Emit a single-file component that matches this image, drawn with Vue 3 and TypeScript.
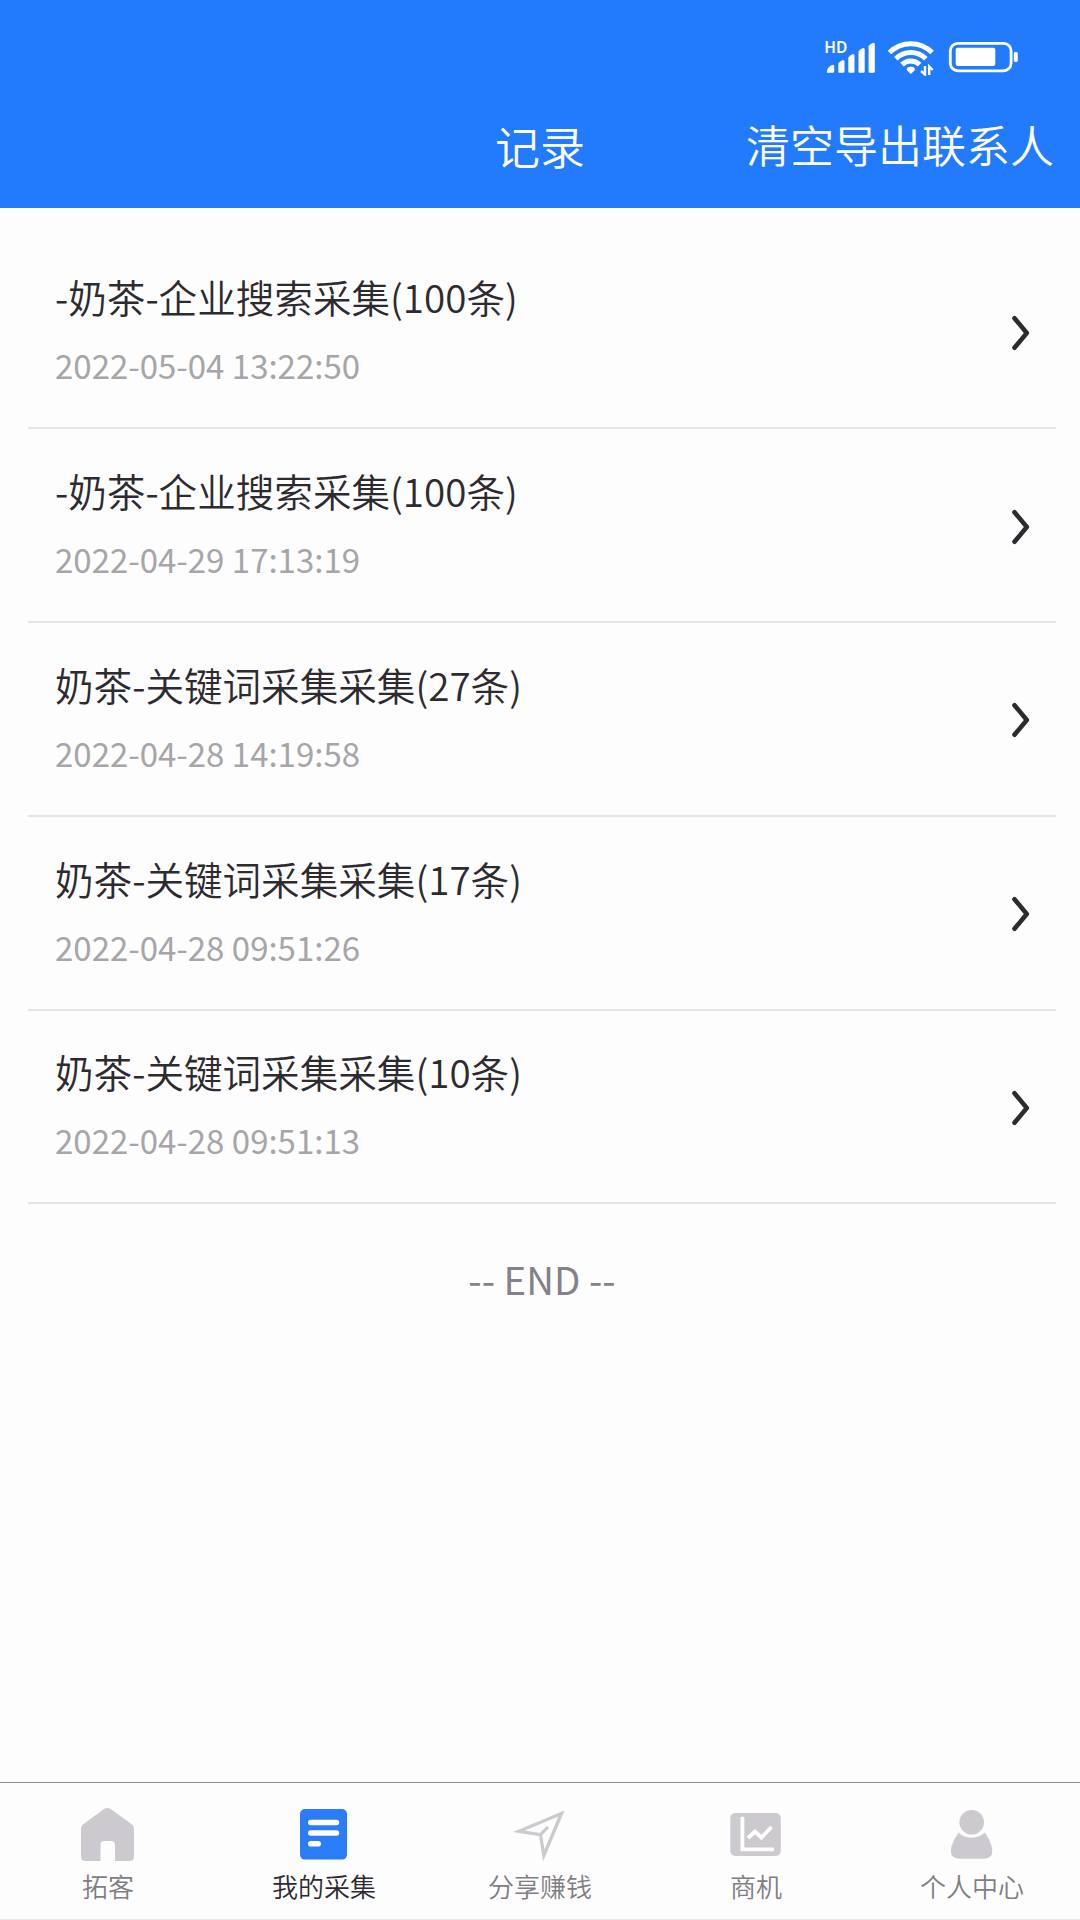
<script setup lang="ts">
interface RecordItem {
  title: string
  time: string
}

interface Tab {
  icon: 'home' | 'list' | 'share' | 'chart' | 'user'
  label: string
}

const records: RecordItem[] = [
  { title: '-奶茶-企业搜索采集(100条)', time: '2022-05-04 13:22:50' },
  { title: '-奶茶-企业搜索采集(100条)', time: '2022-04-29 17:13:19' },
  { title: '奶茶-关键词采集采集(27条)', time: '2022-04-28 14:19:58' },
  { title: '奶茶-关键词采集采集(17条)', time: '2022-04-28 09:51:26' },
  { title: '奶茶-关键词采集采集(10条)', time: '2022-04-28 09:51:13' },
]

const tabs: Tab[] = [
  { icon: 'home', label: '拓客' },
  { icon: 'list', label: '我的采集' },
  { icon: 'share', label: '分享赚钱' },
  { icon: 'chart', label: '商机' },
  { icon: 'user', label: '个人中心' },
]

const activeTab: Tab['icon'] = 'list'
</script>

<template>
  <div class="app">
    <header class="header">
      <div class="status">
        <svg width="57" height="46" viewBox="820 30 57 46" fill="#fff">
          <text x="824.2" y="52.6" class="hd">HD</text>
          <path d="M827 72.7v-2.2q.6-3.600 5-5.600q2.200-.6 2.200 1.500v4.800q0 1.500-1.500 1.500z" />
          <path d="M838.300 71.500V63.500q1.500-2.500 4.400-3.500q1.800-.2 1.800 1.500V71.500q0 1.200-1.200 1.200h-3.800q-1.200 0-1.200-1.200z" />
          <path d="M848.300 71.500V57.500q1.500-2.500 4.400-3.500q1.800-.2 1.800 1.500V71.500q0 1.200-1.200 1.200h-3.800q-1.200 0-1.200-1.200z" />
          <path d="M858.500 71.500V51.500q1.500-2.500 4.400-3.500q1.800-.2 1.800 1.500V71.500q0 1.200-1.200 1.200h-3.800q-1.200 0-1.200-1.200z" />
          <path d="M868.600 71.500V46.300q1.500-2.500 4.400-3.500q1.800-.2 1.800 1.500V71.500q0 1.200-1.200 1.200h-3.800q-1.200 0-1.200-1.200z" />
        </svg>
        <svg width="48" height="46" viewBox="887 30 48 46">
          <g fill="none" stroke="#fff" stroke-width="5">
            <path d="M889.500 52.600a30 30 0 0 1 42.600 0" />
            <path d="M895.800 58.800a21 21 0 0 1 30 0" />
            <path d="M902 64.600a12.500 12.500 0 0 1 17.600 0" />
          </g>
          <path d="M910.800 74l-4-3.800q-.5-3.400 4-3.400t4 3.400z" fill="#fff" />
          <path d="M925 66v8.500l-4-3.500M929.200 75v-8.500l3.500 3.500" fill="none" stroke="#fff" stroke-width="2.400" />
        </svg>
        <svg class="battery" width="72" height="46" viewBox="948 30 72 46">
          <rect x="950.300" y="43.400" width="60.800" height="27.400" rx="7.500" fill="none" stroke="#fff" stroke-width="2.800" />
          <rect x="955.700" y="47.800" width="39.600" height="18.300" rx="2" fill="#fff" />
          <rect x="1013.800" y="51.800" width="4" height="10.400" rx="2" fill="#fff" />
        </svg>
      </div>
      <div class="nav">
        <h1 class="nav-title">记录</h1>
        <span class="nav-action">清空导出联系人</span>
      </div>
    </header>

    <main class="content">
      <ul class="list">
        <li v-for="item in records" :key="item.time" class="row">
          <div class="row-text">
            <div class="row-title">{{ item.title }}</div>
            <div class="row-time">{{ item.time }}</div>
          </div>
          <svg class="chevron" width="20" height="38" viewBox="0 0 20 38">
            <path d="M3.500 4.200L15.800 19L3.500 33.800" fill="none" stroke="#2d2b30" stroke-width="4.600" stroke-linecap="round" stroke-linejoin="round" />
          </svg>
        </li>
      </ul>
      <div class="end">-- END --</div>
    </main>

    <nav class="tabs">
      <div v-for="tab in tabs" :key="tab.icon" class="tab" :class="{ active: tab.icon === activeTab }">
        <svg v-if="tab.icon === 'home'" width="60" height="60" viewBox="78 1804 60 60">
          <path d="M104.500 1808.800q2.900-1.800 5.800 0L131.500 1824q2.500 1.800 2.500 5v27.500q0 4.500-4.500 4.500H115v-16q0-4-4-4h-6.500q-4 0-4 4v16H85.500q-4.500 0-4.500-4.500V1829q0-3.200 2.500-5z" fill="#cccace" />
        </svg>
        <svg v-else-if="tab.icon === 'list'" width="60" height="60" viewBox="294 1804 60 60">
          <rect x="300" y="1809" width="47" height="50.600" rx="5" fill="#2a7cf8" />
          <path d="M310.800 1822.500h25.600M310.800 1833h25.600M310.800 1843.700h7.400" stroke="#fff" stroke-width="5.600" stroke-linecap="round" />
        </svg>
        <svg v-else-if="tab.icon === 'share'" width="60" height="60" viewBox="510 1804 60 60">
          <path d="M561.500 1813.500L519 1831.300L540.500 1834.600L543.800 1855.500ZM540.500 1834.600L548 1826.800" fill="none" stroke="#cccace" stroke-width="3.300" />
        </svg>
        <svg v-else-if="tab.icon === 'chart'" width="60" height="60" viewBox="726 1804 60 60">
          <rect x="730.300" y="1813" width="50.500" height="43" rx="5" fill="#cccace" />
          <path d="M742.400 1818.500V1849.300H772.500" fill="none" stroke="#fff" stroke-width="3.800" stroke-linecap="round" />
          <path d="M748 1838L755 1831.500L761.500 1837.500L771.500 1827" fill="none" stroke="#fff" stroke-width="3.800" />
        </svg>
        <svg v-else width="60" height="60" viewBox="942 1804 60 60" fill="#cccace">
          <circle cx="971.700" cy="1822.300" r="12.300" />
          <path d="M958.500 1832.500q5.500 5.200 13 5.200t13.500-5.200q3.800 5.500 6.600 13.500q3.200 12.500-8 12.700h-24q-11.200-.2-8-12.700q3-8 6.900-13.500z" />
        </svg>
        <span class="tab-label">{{ tab.label }}</span>
      </div>
    </nav>
  </div>
</template>

<style>
body {
  margin: 0;
}
</style>

<style scoped>
.app {
  display: flex;
  flex-direction: column;
  box-sizing: border-box;
  width: 1080px;
  height: 1920px;
  overflow: hidden;
  background: #fdfdfe;
  border-bottom: 1px solid #e9e9ea;
  font-family: 'Noto Sans CJK SC', sans-serif;
  font-weight: 350;
}

.header {
  flex: none;
  box-sizing: border-box;
  height: 208px;
  padding-top: 30px;
  background: #227bfc;
  color: #fff;
}

.status {
  display: flex;
  justify-content: flex-end;
  gap: 10px;
  height: 46px;
  padding-right: 60px;
}

.battery {
  margin-left: 3px;
}

.hd {
  font-family: 'Noto Sans', sans-serif;
  font-size: 15.5px;
  font-weight: 600;
}

.nav {
  display: grid;
  grid-template-columns: 1fr auto 1fr;
  align-items: start;
  padding: 36px 26px 0;
}

.nav-title {
  grid-column: 2;
  margin: 2px 0 0;
  font-size: 45px;
  font-weight: 350;
  line-height: 64px;
}

.nav-action {
  justify-self: end;
  font-size: 44px;
  line-height: 64px;
  white-space: nowrap;
}

.content {
  flex: 1;
  padding: 27.400px 24px 0 28px;
}

.list {
  margin: 0;
  padding: 0;
  list-style: none;
}

.row {
  display: flex;
  align-items: center;
  justify-content: space-between;
  box-sizing: border-box;
  height: 193.800px;
  padding: 0 25px 0 27px;
  border-bottom: 2px solid #e5e4e7;
}

.row-title {
  color: #2d2b30;
  font-size: 38.600px;
  line-height: 58px;
}

.row-time {
  margin-top: 10px;
  color: #a6a5a8;
  font-size: 33px;
  font-weight: 400;
  line-height: 60px;
}

.chevron {
  margin-top: 3px;
}

.end {
  margin-top: 44px;
  color: #838286;
  font-size: 38.400px;
  font-weight: 400;
  line-height: 60px;
  text-align: center;
}

.tabs {
  display: flex;
  flex: none;
  box-sizing: border-box;
  height: 137px;
  padding-top: 21px;
  border-top: 1px solid #8e8d90;
}

.tab {
  display: flex;
  flex: 1;
  flex-direction: column;
  align-items: center;
  color: #7f7e82;
}

.tab.active {
  color: #2d2b30;
}

.tab-label {
  margin-top: 3px;
  font-size: 26px;
  line-height: 38px;
}
</style>
